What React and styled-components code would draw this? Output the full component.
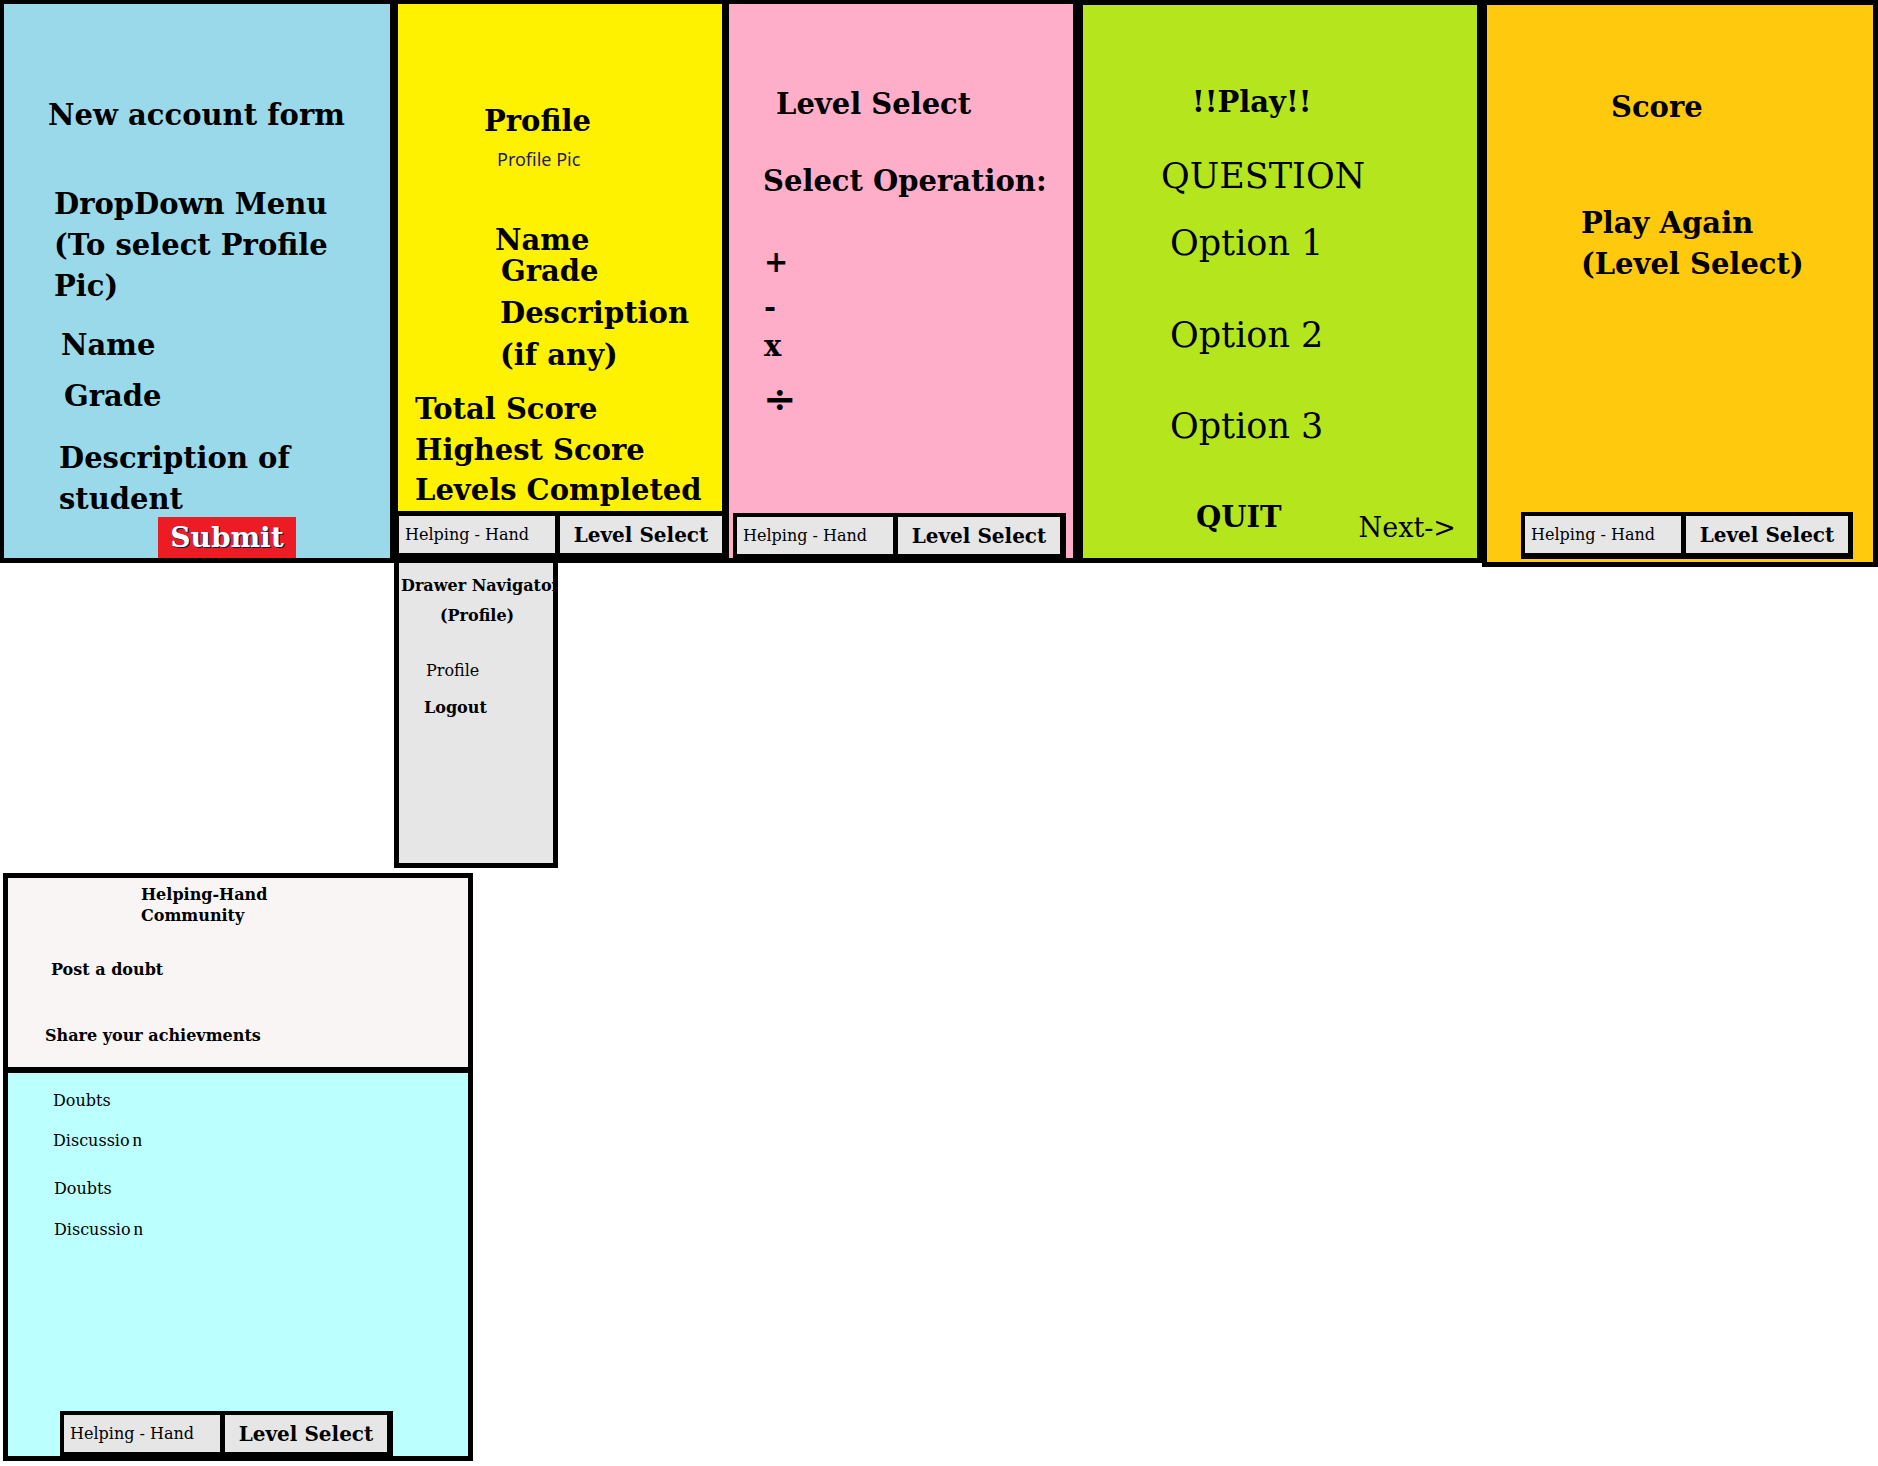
import React from 'react';
import styled, { createGlobalStyle } from 'styled-components';

const GlobalStyle = createGlobalStyle`
  body {
    margin: 0;
    background: #fff;
    color: #000;
    font-family: "DejaVu Serif", "Liberation Serif", serif;
  }
`;

const Page = styled.div`
  width: 1878px;
  height: 1466px;
  display: flex;
  flex-direction: column;
  overflow: hidden;
`;

const TopRow = styled.div`
  display: flex;
  align-items: flex-start;
  height: 563px;
`;

const Panel = styled.div`
  box-sizing: border-box;
  flex-shrink: 0;
  width: ${(p) => p.$w}px;
  height: ${(p) => p.$h || 563}px;
  background: ${(p) => p.$bg};
  border-style: solid;
  border-color: #000;
  border-width: ${(p) => p.$bw || '4px 4px 5px 4px'};
  display: flex;
  flex-direction: column;
`;

const Body = styled.div`
  flex: 1;
  display: flex;
  flex-direction: column;
  align-items: flex-start;
`;

const Text = styled.div`
  margin: ${(p) => p.$mt || 0}px 0 0 ${(p) => p.$ml || 0}px;
  line-height: ${(p) => p.$lh || 36}px;
  white-space: nowrap;
`;

const Heading = styled(Text)`
  font-size: ${(p) => p.$size || 29}px;
  font-weight: bold;
`;

const Plain = styled(Text)`
  font-size: ${(p) => p.$size || 35}px;
  font-weight: normal;
`;

const Caption = styled(Text)`
  font-family: "Noto Sans", "Open Sans", sans-serif;
  font-size: 18px;
  color: #1f1a7a;
`;

const Submit = styled.div`
  margin: -3px 0 0 154px;
  width: 138px;
  height: 41px;
  background: #ed1c24;
  color: #fff;
  font-size: 28px;
  font-weight: bold;
  line-height: 41px;
  text-align: center;
  text-shadow: 1px 1px 0 #1a1a4a, -1px 0 0 #3a3a7a;
`;

const Row = styled.div`
  align-self: stretch;
  display: flex;
  align-items: flex-start;
  margin-top: ${(p) => p.$mt || 0}px;
`;

const Next = styled(Plain)`
  margin-left: auto;
  margin-right: 21px;
`;

const BottomBar = styled.div`
  align-self: flex-start;
  display: flex;
  gap: 5px;
  background: #000;
  padding: ${(p) => p.$pad};
  margin: ${(p) => p.$m || '0'};
`;

const HelpCell = styled.div`
  box-sizing: border-box;
  width: 156px;
  height: 37px;
  background: #e6e6e6;
  padding-left: 6px;
  display: flex;
  align-items: center;
  font-size: 16px;
  white-space: nowrap;
`;

const LevelCell = styled.div`
  width: 162px;
  height: 37px;
  background: #e6e6e6;
  display: flex;
  align-items: center;
  justify-content: center;
  font-size: 20px;
  font-weight: bold;
  white-space: nowrap;
`;

const Drawer = styled.div`
  box-sizing: border-box;
  margin-left: 394px;
  width: 164px;
  height: 305px;
  background: #e6e6e6;
  border: 5px solid #000;
  border-top: none;
  overflow: hidden;
  display: flex;
  flex-direction: column;
  align-items: flex-start;
`;

const Community = styled(Panel)`
  margin: 5px 0 0 3px;
`;

const CommunityTop = styled.div`
  box-sizing: border-box;
  height: 195px;
  background: #f8f5f4;
  border-bottom: 6px solid #000;
  display: flex;
  flex-direction: column;
  align-items: flex-start;
`;

const CommunityFeed = styled.div`
  flex: 1;
  background: #bbffff;
  display: flex;
  flex-direction: column;
  align-items: flex-start;
`;

const OddN = styled.span`
  font-family: "Liberation Serif", serif;
  font-size: 19px;
  margin-left: 3px;
`;

const NavBar = ({ pad, m }) => (
  <BottomBar $pad={pad} $m={m}>
    <HelpCell>Helping - Hand</HelpCell>
    <LevelCell>Level Select</LevelCell>
  </BottomBar>
);

export default function App() {
  return (
    <Page>
      <GlobalStyle />
      <TopRow>
        <Panel $w={394} $bg="#99d9ea">
          <Body>
            <Heading $mt={93} $ml={44}>New account form</Heading>
            <Heading $mt={51} $ml={50} $lh={41}>
              DropDown Menu
              <br />
              (To select Profile
              <br />
              Pic)
            </Heading>
            <Heading $mt={20} $ml={57}>Name</Heading>
            <Heading $mt={15} $ml={60}>Grade</Heading>
            <Heading $mt={24} $ml={55} $lh={41}>
              Description of
              <br />
              student
            </Heading>
            <Submit>Submit</Submit>
          </Body>
        </Panel>

        <Panel $w={331} $bg="#fff200" $bw="4px 3px 5px 4px">
          <Body>
            <Heading $mt={99} $ml={86}>Profile</Heading>
            <Caption $mt={8} $ml={99} $lh={24}>Profile Pic</Caption>
            <Heading $mt={54} $ml={97} $lh={31}>Name</Heading>
            <Heading $ml={103} $lh={31}>Grade</Heading>
            <Heading $mt={5} $ml={102} $lh={42}>
              Description
              <br />
              (if any)
            </Heading>
            <Heading $mt={13} $ml={17} $lh={40.5}>
              Total Score
              <br />
              Highest Score
              <br />
              Levels Completed
            </Heading>
          </Body>
          <NavBar pad="5px 0 5px 1px" />
        </Panel>

        <Panel $w={353} $bg="#ffaec9" $bw="4px 5px 5px 4px">
          <Body>
            <Heading $mt={82} $ml={47}>Level Select</Heading>
            <Heading $mt={41} $ml={34}>Select Operation:</Heading>
            <Heading $mt={45} $ml={35}>+</Heading>
            <Heading $mt={9} $ml={35}>-</Heading>
            <Heading $mt={3} $ml={35}>x</Heading>
            <Heading $mt={12} $ml={34} $size={40} $lh={44}>÷</Heading>
          </Body>
          <NavBar pad="4px 6px 4px 4px" m="0 7px 0 4px" />
        </Panel>

        <Panel $w={404} $bg="#b5e61d" $bw="5px">
          <Body>
            <Heading $mt={79} $ml={109}>!!Play!!</Heading>
            <Plain $mt={34} $ml={78} $size={35} $lh={44}>QUESTION</Plain>
            <Plain $mt={23} $ml={87} $lh={44}>Option 1</Plain>
            <Plain $mt={48} $ml={87} $lh={44}>Option 2</Plain>
            <Plain $mt={47} $ml={87} $lh={44}>Option 3</Plain>
            <Row $mt={51}>
              <Heading $ml={113}>QUIT</Heading>
              <Next $mt={11} $size={27}>Next-&gt;</Next>
            </Row>
          </Body>
        </Panel>

        <Panel $w={396} $h={567} $bg="#ffc90e" $bw="5px">
          <Body>
            <Heading $mt={84} $ml={124}>Score</Heading>
            <Heading $mt={78} $ml={94} $lh={41}>
              Play Again
              <br />
              (Level Select)
            </Heading>
          </Body>
          <NavBar pad="4px 5px 6px 4px" m="0 19px 3px 34px" />
        </Panel>
      </TopRow>

      <Drawer>
        <Heading $mt={11} $ml={2} $size={16} $lh={24}>Drawer Navigator</Heading>
        <Heading $mt={6} $ml={41} $size={16} $lh={24}>(Profile)</Heading>
        <Plain $mt={31} $ml={27} $size={16} $lh={24}>Profile</Plain>
        <Heading $mt={13} $ml={25} $size={16} $lh={24}>Logout</Heading>
      </Drawer>

      <Community $w={470} $h={588} $bg="#bbffff" $bw="5px">
        <CommunityTop>
          <Heading $mt={6} $ml={133} $size={16} $lh={21}>
            Helping-Hand
            <br />
            Community
          </Heading>
          <Heading $mt={34} $ml={43} $size={16} $lh={20}>Post a doubt</Heading>
          <Heading $mt={46} $ml={37} $size={16} $lh={20}>Share your achievments</Heading>
        </CommunityTop>
        <CommunityFeed>
          <Plain $mt={18} $ml={45} $size={16} $lh={20}>Doubts</Plain>
          <Plain $mt={19} $ml={45} $size={16} $lh={20}>
            Discussio<OddN>n</OddN>
          </Plain>
          <Plain $mt={28} $ml={46} $size={16} $lh={20}>Doubts</Plain>
          <Plain $mt={20} $ml={46} $size={16} $lh={20}>
            Discussio<OddN>n</OddN>
          </Plain>
          <NavBar pad="4px 6px 4px 4px" m="auto 0 0 52px" />
        </CommunityFeed>
      </Community>
    </Page>
  );
}
